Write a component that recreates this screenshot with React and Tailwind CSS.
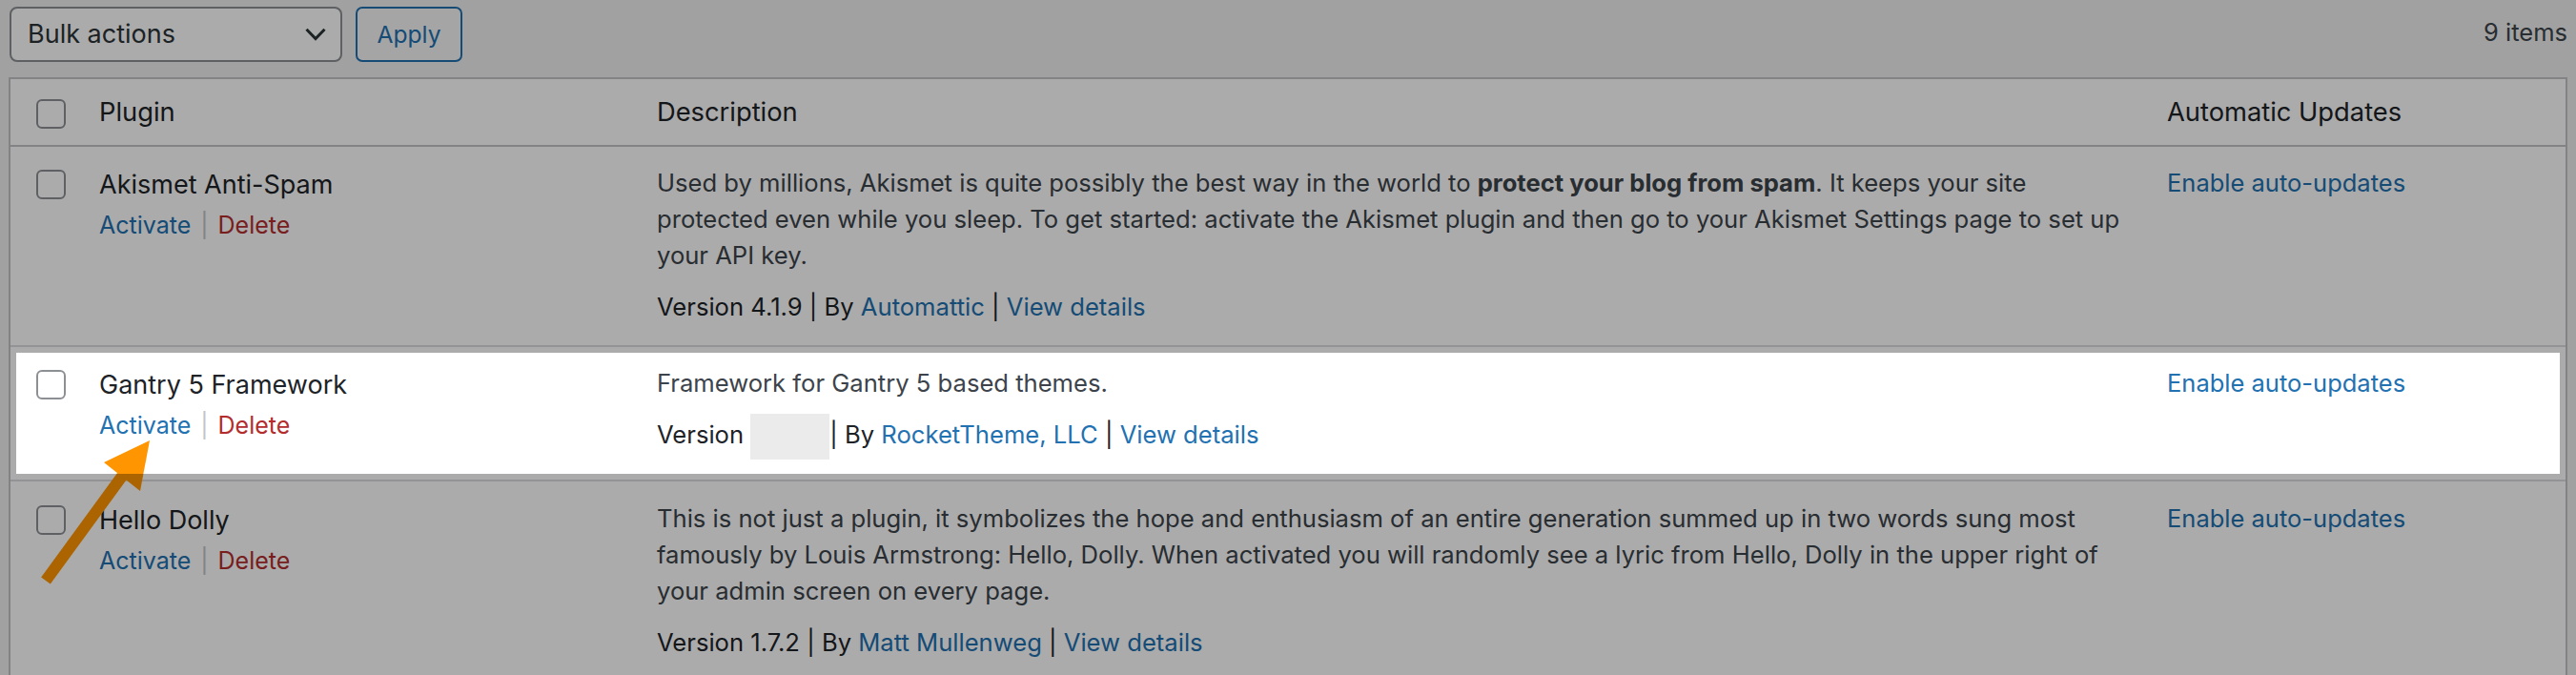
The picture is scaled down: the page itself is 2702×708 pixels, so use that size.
const link = "text-[#2271b1]";

const Checkbox = () => (
  <span className="block h-[31px] w-[31px] rounded-[6px] border-2 border-[#8c8f94] bg-white" />
);

const RowActions = () => (
  <div className="mt-[4px] whitespace-nowrap text-[25px]">
    <span className={link}>Activate</span>
    <span className="mx-[10px] text-[#c3c4c7]">|</span>
    <span className="text-[#b32d2e]">Delete</span>
  </div>
);

const plugins = [
  {
    name: "Akismet Anti-Spam",
    lines: [
      <>
        Used by millions, Akismet is quite possibly the best way in the world to{" "}
        <strong className="font-bold">protect your blog from spam</strong>. It keeps your site
      </>,
      "protected even while you sleep. To get started: activate the Akismet plugin and then go to your Akismet Settings page to set up",
      "your API key.",
    ],
    version: "4.1.9",
    author: "Automattic",
    pad: "pt-[21px] pb-[21px]",
  },
  {
    name: "Gantry 5 Framework",
    lines: ["Framework for Gantry 5 based themes."],
    version: null,
    author: "RocketTheme, LLC",
    highlight: true,
    pad: "border-t-2 pt-[21px] pb-[28px]",
  },
  {
    name: "Hello Dolly",
    lines: [
      "This is not just a plugin, it symbolizes the hope and enthusiasm of an entire generation summed up in two words sung most",
      "famously by Louis Armstrong: Hello, Dolly. When activated you will randomly see a lyric from Hello, Dolly in the upper right of",
      "your admin screen on every page.",
    ],
    version: "1.7.2",
    author: "Matt Mullenweg",
    pad: "border-t-2 pt-[22px] pb-[20px]",
  },
];

const cols = "grid grid-cols-[75px_585px_1584px_1fr]";

const PluginRow = ({ p }) => (
  <div className={`relative ${cols} border-[#dcdcde] bg-white ${p.pad}`}>
    <div className="pl-[27px] pt-[3px]">
      <Checkbox />
    </div>
    <div className="pl-[18px]">
      <div className="whitespace-nowrap text-[27px] text-[#1d2327]">{p.name}</div>
      <RowActions />
    </div>
    <div className="-mt-[2px] pl-[18px] text-[25.6px] text-[#3c434a]">
      {p.lines.map((l, i) => (
        <div key={i} className="whitespace-nowrap">{l}</div>
      ))}
      <div className="mt-[16px] whitespace-nowrap text-[#1d2327]">
        Version{" "}
        {p.version ?? (
          <span className="relative inline-block w-[83px]">
            <span className="absolute left-0 top-[-31px] h-[48px] w-[83px] bg-[#ebebeb]" />
          </span>
        )}
        {p.version ? " " : ""}| By <span className={link}>{p.author}</span> |{" "}
        <span className={link}>View details</span>
      </div>
    </div>
    <div className="-mt-[2px] pl-[18px] text-[25.5px]">
      <span className={link}>Enable auto-updates</span>
    </div>
    {p.highlight && (
      <div className="pointer-events-none absolute inset-[6px] z-20 shadow-[0_0_0_9999px_rgba(0,0,0,0.33)]" />
    )}
  </div>
);

export default function App() {
  return (
    <div className="relative h-[708px] overflow-hidden bg-[#f0f0f1] font-['Inter',sans-serif] text-[25px] leading-[38px] text-[#3c434a]">
      <div className="flex items-center justify-between pl-[10px] pr-[9px] pt-[7px]">
        <div className="flex gap-[14px]">
          <div className="flex h-[58px] w-[349px] items-center justify-between rounded-[8px] border-2 border-[#8c8f94] bg-white pl-[17px] pr-[15px] text-[27px] text-[#2c3338]">
            <span>Bulk actions</span>
            <svg width="22" height="14" viewBox="0 0 22 14" fill="none">
              <polyline points="1.5,1.8 11,11.5 20.5,1.8" stroke="#2c3338" strokeWidth="3" />
            </svg>
          </div>
          <div className="flex h-[58px] w-[112px] items-center justify-center rounded-[7px] border-2 border-[#2271b1] bg-[#f6f7f7] text-[24.6px] text-[#2271b1]">
            Apply
          </div>
        </div>
        <span className="mb-[4px] text-[25.5px] text-[#3c434a]">9 items</span>
      </div>

      <div className="mx-[9px] mt-[16px] border-2 border-[#c3c4c7] bg-white">
        <div className={`${cols} border-b-2 border-[#c3c4c7] pb-[15px] pt-[16px] text-[27.3px] text-[#1d2327]`}>
          <div className="pl-[27px] pt-[5px]">
            <Checkbox />
          </div>
          <div className="pl-[18px]">Plugin</div>
          <div className="pl-[18px]">Description</div>
          <div className="pl-[18px]">Automatic Updates</div>
        </div>
        {plugins.map((p) => (
          <PluginRow key={p.name} p={p} />
        ))}
      </div>

      <svg className="pointer-events-none absolute left-0 top-0 z-10" width="200" height="708" viewBox="0 0 200 708">
        <line x1="132" y1="494" x2="48" y2="609" stroke="#ff9500" strokeWidth="12" />
        <polygon points="157,462 109,485 147,515" fill="#ff9500" />
      </svg>
    </div>
  );
}
